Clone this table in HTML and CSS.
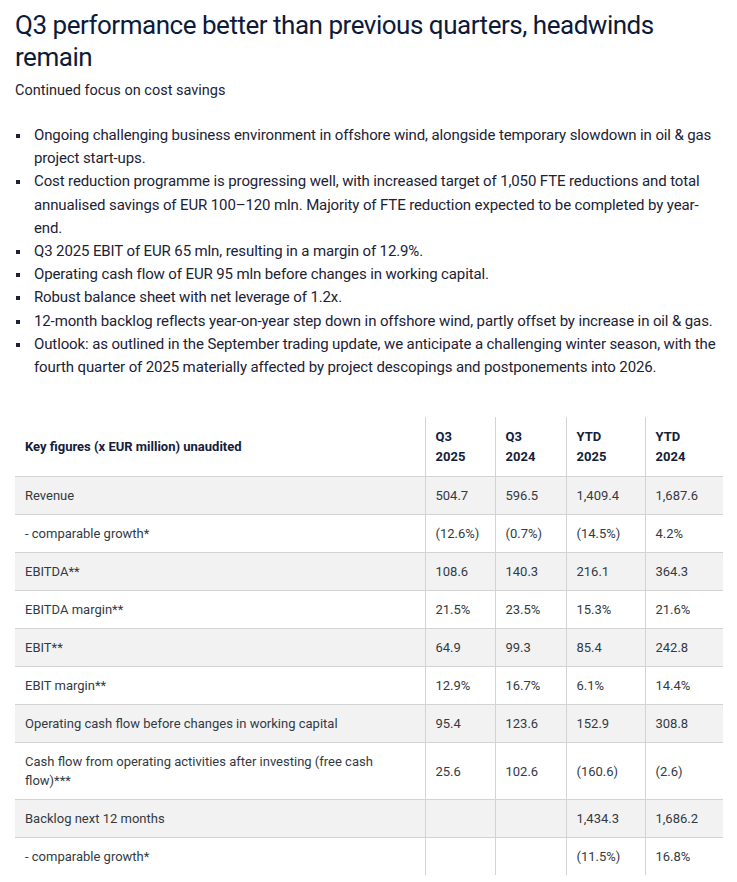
FILE: index.html
```html
<!DOCTYPE html>
<html lang="en">
<head>
<meta charset="utf-8">
<title>Q3 performance</title>
<link rel="stylesheet" href="styles.css">
</head>
<body>
<main class="page">
  <h1 class="title">Q3 performance better than previous quarters, headwinds remain</h1>
  <p class="subtitle">Continued focus on cost savings</p>
  <ul class="bullets">
    <li>Ongoing challenging business environment in offshore wind, alongside temporary slowdown in oil &amp; gas project start-ups.</li>
    <li>Cost reduction programme is progressing well, with increased target of 1,050 FTE reductions and total annualised savings of EUR 100–120 mln. Majority of FTE reduction expected to be completed by year-end.</li>
    <li>Q3 2025 EBIT of EUR 65 mln, resulting in a margin of 12.9%.</li>
    <li>Operating cash flow of EUR 95 mln before changes in working capital.</li>
    <li>Robust balance sheet with net leverage of 1.2x.</li>
    <li>12-month backlog reflects year-on-year step down in offshore wind, partly offset by increase in oil &amp; gas.</li>
    <li>Outlook: as outlined in the September trading update, we anticipate a challenging winter season, with the fourth quarter of 2025 materially affected by project descopings and postponements into 2026.</li>
  </ul>
  <table class="figures">
    <colgroup>
      <col class="c-label"><col class="c-q1"><col class="c-q2"><col class="c-y1"><col class="c-y2">
    </colgroup>
    <thead>
      <tr>
        <th>Key figures (x EUR million) unaudited</th>
        <th>Q3<br>2025</th>
        <th>Q3<br>2024</th>
        <th>YTD<br>2025</th>
        <th>YTD<br>2024</th>
      </tr>
    </thead>
    <tbody>
      <tr class="shade"><td>Revenue</td><td>504.7</td><td>596.5</td><td>1,409.4</td><td>1,687.6</td></tr>
      <tr><td>- comparable growth*</td><td>(12.6%)</td><td>(0.7%)</td><td>(14.5%)</td><td>4.2%</td></tr>
      <tr class="shade"><td>EBITDA**</td><td>108.6</td><td>140.3</td><td>216.1</td><td>364.3</td></tr>
      <tr><td>EBITDA margin**</td><td>21.5%</td><td>23.5%</td><td>15.3%</td><td>21.6%</td></tr>
      <tr class="shade"><td>EBIT**</td><td>64.9</td><td>99.3</td><td>85.4</td><td>242.8</td></tr>
      <tr><td>EBIT margin**</td><td>12.9%</td><td>16.7%</td><td>6.1%</td><td>14.4%</td></tr>
      <tr class="shade"><td>Operating cash flow before changes in working capital</td><td>95.4</td><td>123.6</td><td>152.9</td><td>308.8</td></tr>
      <tr><td>Cash flow from operating activities after investing (free cash flow)***</td><td>25.6</td><td>102.6</td><td>(160.6)</td><td>(2.6)</td></tr>
      <tr class="shade"><td>Backlog next 12 months</td><td></td><td></td><td>1,434.3</td><td>1,686.2</td></tr>
      <tr class="last"><td>- comparable growth*</td><td></td><td></td><td>(11.5%)</td><td>16.8%</td></tr>
    </tbody>
  </table>
</main>
</body>
</html>
```

FILE: styles.css
```css
html, body {
  margin: 0;
  padding: 0;
  background: #ffffff;
}

body {
  font-family: Roboto, Inter, "Noto Sans", sans-serif;
  color: #1c2236;
}

.page {
  width: 708px;
  padding: 9px 0 0 15px;
}

.title {
  margin: 0;
  font-size: 26px;
  line-height: 32px;
  font-weight: 400;
  color: #0d1a38;
  letter-spacing: -0.48px;
}

.subtitle {
  margin: 7px 0 0;
  font-size: 14.5px;
  line-height: 22px;
  color: #1c2236;
}

.bullets {
  list-style: none;
  margin: 22px 0 0;
  padding: 0;
  font-size: 15px;
  line-height: 23.2px;
  letter-spacing: -0.12px;
  color: #1c2236;
}

.bullets li {
  position: relative;
  padding-left: 19px;
}

.bullets li::before {
  content: "";
  position: absolute;
  left: 1px;
  top: 10px;
  width: 4px;
  height: 4px;
  background: #1c2236;
}

.figures {
  margin-top: 38px;
  width: 708px;
  border-collapse: collapse;
  table-layout: fixed;
  font-size: 13px;
  color: #333a44;
}

.c-label { width: 410px; }
.c-q1 { width: 70px; }
.c-q2 { width: 71px; }
.c-y1 { width: 79px; }
.c-y2 { width: 78px; }

.figures th,
.figures td {
  text-align: left;
  vertical-align: middle;
  border-left: 1px solid #d3d3d3;
  border-bottom: 1px solid #d3d3d3;
  padding: 9px 10px;
  line-height: 19px;
}

.figures th:first-child,
.figures td:first-child {
  border-left: none;
}

.figures th {
  font-weight: 700;
  color: #14203a;
  padding: 10px 10px 9px;
  line-height: 20px;
}

.figures tr.shade td {
  background: #f2f2f2;
}

.figures tr.last td {
  border-bottom: none;
}
```
